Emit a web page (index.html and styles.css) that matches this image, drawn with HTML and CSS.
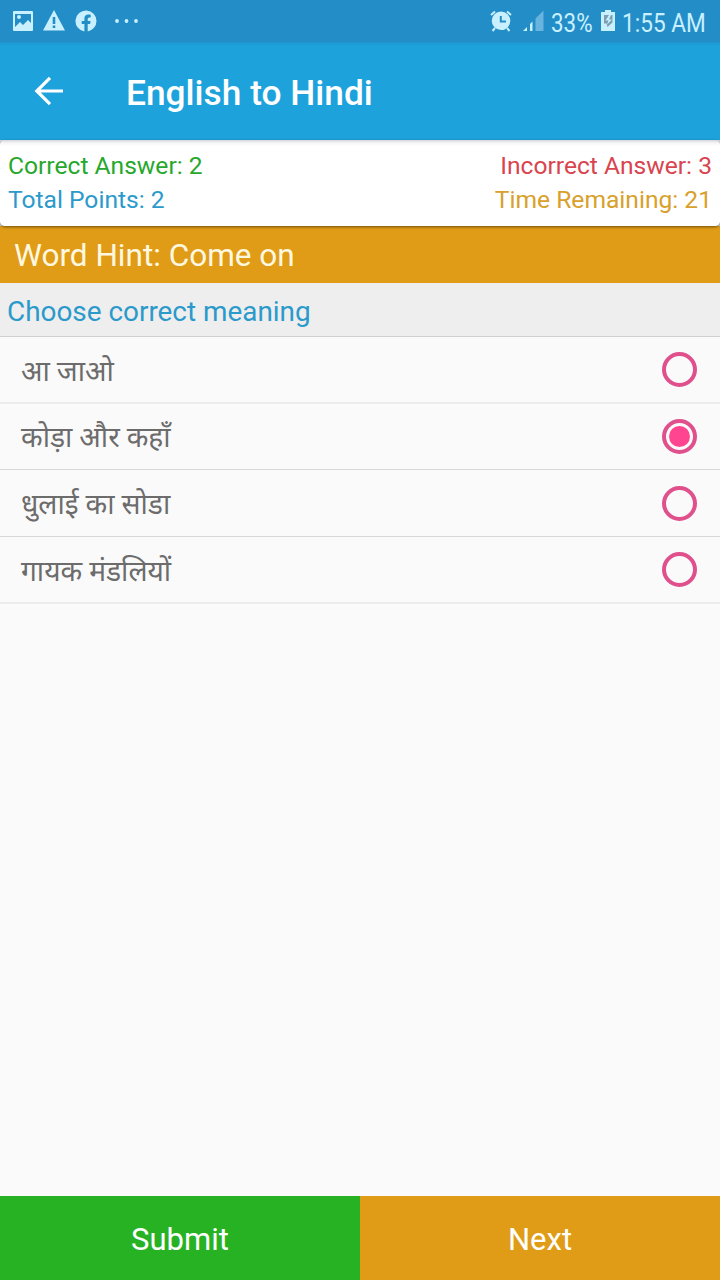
FILE: index.html
```html
<!DOCTYPE html>
<html lang="en">
<head>
  <meta charset="UTF-8">
  <meta name="viewport" content="width=device-width, initial-scale=1.0">
  <title>English to Hindi</title>
  <link rel="stylesheet" href="styles.css">
</head>
<body>
  <div class="screen">
    <!-- Status bar -->
    <div class="status-bar">
      <div class="status-left">
        <svg width="22" height="22" viewBox="0 0 22 22">
          <path fill-rule="evenodd" d="M2 1h18a1 1 0 0 1 1 1v18a1 1 0 0 1-1 1H2a1 1 0 0 1-1-1V2a1 1 0 0 1 1-1zM3 4v13l5-5 3 3 5-5 3 3V4zM7 5a2 2 0 1 1 0 4a2 2 0 0 1 0-4z"/>
        </svg>
        <svg class="icon-warning" width="22" height="22" viewBox="0 0 22 22">
          <path fill-rule="evenodd" d="M11 0 22 20.500H0zM9.700 7v7h2.600V7zM9.700 15.500V18h2.600v-2.500z"/>
        </svg>
        <svg class="icon-facebook" width="22" height="22" viewBox="0 0 22 22">
          <path d="M21.5 11A10.5 10.5 0 1 0 9.4 21.4V14H6.7v-3h2.7V8.7c0-2.7 1.6-4.1 4-4.1 1.1 0 2.3.2 2.3.2v2.6h-1.3c-1.3 0-1.7.8-1.7 1.6v2h2.9l-.5 3h-2.4v7.4A10.5 10.500 0 0 0 21.5 11z"/>
        </svg>
        <svg class="icon-dots" width="24" height="22" viewBox="0 0 24 22">
          <circle cx="2" cy="11" r="1.9"/><circle cx="11.5" cy="11" r="1.9"/><circle cx="21" cy="11" r="1.9"/>
        </svg>
      </div>
      <div class="status-right">
        <svg width="22" height="22" viewBox="0 0 22 22">
          <path fill-rule="evenodd" d="M11 1.500a9.300 9.300 0 1 1 0 18.600a9.300 9.300 0 0 1 0-18.600zM9.800 6v6.400H16v-2h-4.200V6z"/>
          <path class="line" d="M1 5l4-3.500M21 5l-4-3.500M5 18l-2.500 3M17 18l2.500 3"/>
        </svg>
        <svg class="icon-signal" width="21" height="22" viewBox="0 0 21 22">
          <path d="M0 21l4-4v4zM7 14l2.500-2.500V21H7z"/>
          <path class="faded" d="M12.500 21V8.500l2-2V21zM14.500 6.500l6-6V21h-6z"/>
        </svg>
        <span class="battery-text">33%</span>
        <svg class="icon-battery" width="14" height="22" viewBox="0 0 14 22">
          <path d="M4 0h6v2h4v19H0V2h4z"/>
          <path class="bolt" d="M3 5h8.500v7.500L6.500 17l-1-3.500H3z"/>
          <path d="M8 5 4.500 10.500h3L6 14.500 11 9.500H8L10 5z"/>
        </svg>
        <span class="clock-text">1:55 AM</span>
      </div>
    </div>

    <header class="app-bar">
      <svg class="back-icon" width="30" height="30" viewBox="0 0 30 30">
        <path d="M29 15H3M16 1.800 2.800 15 16 28.200"/>
      </svg>
      <h1>English to Hindi</h1>
    </header>

    <!-- Score card -->
    <div class="score-wrap">
      <div class="score-card">
        <div class="score-row">
          <span class="correct">Correct Answer: 2</span>
          <span class="incorrect">Incorrect Answer: 3</span>
        </div>
        <div class="score-row">
          <span class="points">Total Points: 2</span>
          <span class="time">Time Remaining: 21</span>
        </div>
      </div>
    </div>

    <div class="word-hint">Word Hint: Come on</div>
    <div class="list-title">Choose correct meaning</div>

    <!-- Options -->
    <ul class="options" lang="hi">
      <li class="option"><span>आ जाओ</span><i class="radio"></i></li>
      <li class="option"><span>कोड़ा और कहाँ</span><i class="radio checked"></i></li>
      <li class="option"><span>धुलाई का सोडा</span><i class="radio"></i></li>
      <li class="option"><span>गायक मंडलियों</span><i class="radio"></i></li>
    </ul>

    <footer class="actions">
      <button class="submit-btn">Submit</button>
      <button class="next-btn">Next</button>
    </footer>
  </div>
</body>
</html>
```
FILE: styles.css
```css
* {
  box-sizing: border-box;
}
body {
  margin: 0;
  background-color: #fafafa;
  font-family: Roboto, "Noto Sans", sans-serif;
}
.screen {
  display: flex;
  flex-direction: column;
  width: 720px;
  height: 1280px;
  overflow: hidden;
}

/* Status bar */
.status-bar {
  display: flex;
  justify-content: space-between;
  height: 42px;
  padding: 0 14px 0 12px;
  background-color: #238dc8;
  color: #c9f0ff;
  font-size: 26px;
  line-height: 30px;
}
.status-bar svg {
  fill: #c9f0ff;
  flex: none;
}
.status-left,
.status-right {
  display: flex;
  align-items: center;
}
.icon-warning {
  margin-left: 9px;
}
.icon-facebook {
  margin-left: 10px;
}
.icon-dots {
  margin-left: 18px;
}
.icon-signal {
  margin-left: 11px;
}
.status-bar .line {
  fill: none;
  stroke: #c9f0ff;
  stroke-width: 2;
}
.status-bar .faded {
  fill: #68b4de;
}
.status-bar .bolt {
  fill: #7c9fb4;
}
.battery-text,
.clock-text {
  padding-top: 3px;
  white-space: nowrap;
  transform-origin: left;
}
.battery-text {
  width: 42px;
  margin-left: 7px;
  transform: scaleX(0.86);
}
.icon-battery {
  margin-left: 8px;
}
.clock-text {
  width: 84px;
  margin-left: 7px;
  transform: scaleX(0.87);
}

/* App bar */
.app-bar {
  display: flex;
  align-items: center;
  height: 98px;
  padding: 0 0 0 34px;
  background: linear-gradient(#1e95cf, #1ea2dc 4px);
  color: #fff;
}
.app-bar h1 {
  margin: 3px 0 0 62px;
  font-size: 35.3px;
  font-weight: 500;
}
.back-icon {
  fill: none;
  stroke: #fff;
  stroke-width: 3.2;
}

/* Score card */
.score-wrap {
  height: 86px;
  background-color: #d8dadd;
}
.score-card {
  position: relative;
  height: 86px;
  padding: 8px 8px 0;
  border-radius: 5px;
  background: linear-gradient(#d3d8de, #f6f6f7 3px, #fff 6px);
  box-shadow: 0 1px 3px rgba(0, 0, 0, 0.5);
}
.score-row {
  display: flex;
  justify-content: space-between;
  height: 34px;
  font-size: 24.6px;
  line-height: 35px;
}
.correct {
  color: #27a82d;
}
.incorrect {
  color: #d9444f;
}
.points {
  color: #2b9acb;
}
.time {
  color: #d9a02b;
}

.word-hint {
  height: 57px;
  padding-left: 14px;
  background-color: #e09c16;
  color: #fff8e0;
  font-size: 31.5px;
  line-height: 60px;
}
.list-title {
  height: 54px;
  padding-left: 7px;
  border-bottom: 1px solid #d0d0d0;
  background-color: #eeeeee;
  color: #2b9acb;
  font-size: 27.9px;
  line-height: 57px;
}

/* Options */
.options {
  flex: 1;
  margin: 0;
  padding: 0;
  list-style: none;
}
.option {
  display: flex;
  align-items: center;
  justify-content: space-between;
  height: 66.67px;
  padding: 0 23px 0 21px;
  border-bottom: 1px solid #d8d8d8;
  color: #6c6c6c;
  font-size: 28.2px;
}
.option:first-child,
.option:last-child {
  border-bottom: 2px solid #ececec;
}
.option:first-child span,
.option:last-child span {
  padding-top: 2px;
}
.radio {
  display: flex;
  align-items: center;
  justify-content: center;
  width: 35px;
  height: 35px;
  border: 4px solid #e0508c;
  border-radius: 50%;
}
.radio.checked::before {
  content: "";
  width: 21px;
  height: 21px;
  border-radius: 50%;
  background-color: #ff4490;
}

/* Bottom buttons */
.actions {
  display: flex;
  height: 84px;
}
.actions button {
  flex: 1;
  padding: 2px 0 0;
  border: none;
  color: #fff;
  font-family: inherit;
  font-size: 31px;
}
.submit-btn {
  background-color: #27b224;
}
.next-btn {
  background-color: #e09c16;
}
```
